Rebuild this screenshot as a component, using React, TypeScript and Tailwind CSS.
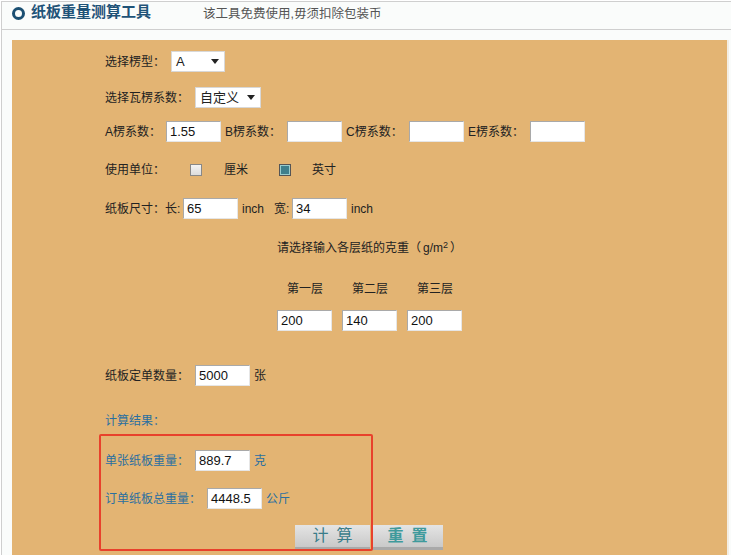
import React from "react";

const cjk = { fontFamily: '"Liberation Sans", "Noto Sans CJK SC", sans-serif' };

const Field = ({ value = "", w = "w-[55px]" }: { value?: string; w?: string }) => (
  <div
    className={`${w} h-[21px] shrink-0 bg-white border border-t-[#a9a9a9] border-l-[#a9a9a9] border-r-[#e6e6e6] border-b-[#e6e6e6] px-[3px] flex items-center text-[13px] text-[#111]`}
  >
    {value}
  </div>
);

const Select = ({ value, w }: { value: string; w: string }) => (
  <div className={`${w} h-[21px] shrink-0 bg-white border border-[#d8d8d8] flex items-center justify-between pl-[4px] pr-[5px] text-[13px] text-[#222]`}>
    <span>{value}</span>
    <svg width="8" height="5" viewBox="0 0 8 5">
      <path d="M0 0H8L4 5Z" fill="#222" />
    </svg>
  </div>
);

const Box = ({ on }: { on?: boolean }) => (
  <span
    className={`inline-block shrink-0 w-[12px] h-[12px] border ${
      on ? "border-[#555] bg-[#3f7f8c] shadow-[inset_0_0_0_1px_#9cc]" : "border-[#888] bg-[linear-gradient(#f4f4f4,#dcdcdc)]"
    }`}
  />
);

export default function App() {
  return (
    <div className="w-[731px] h-[555px] overflow-hidden bg-white text-[12px] text-[#222]" style={cjk}>
      <div className="ml-[1px] mt-[1px] border-t border-l border-[#cfcfcf] bg-[#fafcfb] h-[554px]">
        {/* header */}
        <div className="h-[28px] border-b border-[#cfcfcf] flex items-center pl-[10px]">
          <span className="shrink-0 w-[13px] h-[13px] rounded-full border-[3px] border-[#1b4f72] -mt-[4px]" />
          <span className="ml-[6px] text-[15px] font-bold text-[#1f5378] -mt-[6px]">纸板重量测算工具</span>
          <span className="ml-[52px] text-[12.5px] text-[#555] -mt-[2px]">该工具免费使用,毋须扣除包装币</span>
        </div>

        {/* panel */}
        <div className="mt-[10px] ml-[10px] w-[717px] h-[520px] bg-[#e3b473] relative border-r-[2px] border-[#f3eee4] pl-[93px] pt-[11px]">
          <div className="h-[21px] flex items-center">
            <span className="w-[66px]">选择楞型：</span>
            <Select value="A" w="w-[54px]" />
          </div>

          <div className="h-[21px] mt-[15px] flex items-center">
            <span className="w-[90px]">选择瓦楞系数：</span>
            <Select value="自定义" w="w-[66px]" />
          </div>

          <div className="h-[21px] mt-[13px] flex items-center">
            <span className="w-[61px]">A楞系数：</span>
            <Field value="1.55" />
            <span className="w-[66px] pl-[4px]">B楞系数：</span>
            <Field />
            <span className="w-[67px] pl-[4px]">C楞系数：</span>
            <Field />
            <span className="w-[66px] pl-[4px]">E楞系数：</span>
            <Field />
          </div>

          <div className="h-[22px] mt-[17px] flex items-center">
            <span className="w-[85px]">使用单位：</span>
            <Box />
            <span className="ml-[22px] w-[55px]">厘米</span>
            <Box on />
            <span className="ml-[21px]">英寸</span>
          </div>

          <div className="h-[21px] mt-[17px] flex items-center">
            <span className="w-[78px]">纸板尺寸：长:</span>
            <Field value="65" />
            <span className="ml-[4px] w-[32px]">inch</span>
            <span className="w-[18px]">宽:</span>
            <Field value="34" />
            <span className="ml-[4px]">inch</span>
          </div>

          <div className="h-[20px] mt-[19px] flex items-center pl-[172px]">
            请选择输入各层纸的克重（<span className="ml-[2px]">g/m<sup className="text-[9px]">2</sup></span>
            <span className="ml-[2px]">）</span>
          </div>

          <div className="h-[20px] mt-[21px] flex items-center pl-[182px] gap-[29px]">
            <span>第一层</span>
            <span>第二层</span>
            <span>第三层</span>
          </div>

          <div className="h-[21px] mt-[11px] flex items-center pl-[172px] gap-[10px]">
            <Field value="200" />
            <Field value="140" />
            <Field value="200" />
          </div>

          <div className="h-[21px] mt-[34px] flex items-center">
            <span className="w-[90px]">纸板定单数量：</span>
            <Field value="5000" />
            <span className="ml-[4px]">张</span>
          </div>

          <div className="h-[20px] mt-[25px] flex items-center text-[#2a6fa0]">计算结果：</div>

          <div className="h-[21px] mt-[19px] flex items-center">
            <span className="w-[90px] text-[#2a6fa0]">单张纸板重量：</span>
            <Field value="889.7" />
            <span className="ml-[4px] text-[#2a6fa0]">克</span>
          </div>

          <div className="h-[21px] mt-[17px] flex items-center">
            <span className="w-[102px] text-[#2a6fa0]">订单纸板总重量：</span>
            <Field value="4448.5" />
            <span className="ml-[4px] text-[#2a6fa0]">公斤</span>
          </div>

          <div className="h-[25px] mt-[16px] flex items-center pl-[190px] gap-[2px]">
            <div className="w-[75px] h-[25px] flex items-center justify-center text-[16px] tracking-[8px] pl-[8px] text-[#3a7d8a] bg-[linear-gradient(#e4e4e4,#c9c9c9)] border-b-[3px] border-[#a9a9a9]">
              计算
            </div>
            <div className="w-[71px] h-[25px] flex items-center justify-center text-[16px] font-bold tracking-[8px] pl-[8px] text-[#3f9a9c] bg-[linear-gradient(#e4e4e4,#c9c9c9)] border-b-[3px] border-[#a9a9a9]">
              重置
            </div>
          </div>

          {/* annotation */}
          <div className="absolute left-[87px] top-[394px] w-[274px] h-[117px] border-2 border-[#e8412c] rounded-[2px] pointer-events-none" />
        </div>
      </div>
    </div>
  );
}
